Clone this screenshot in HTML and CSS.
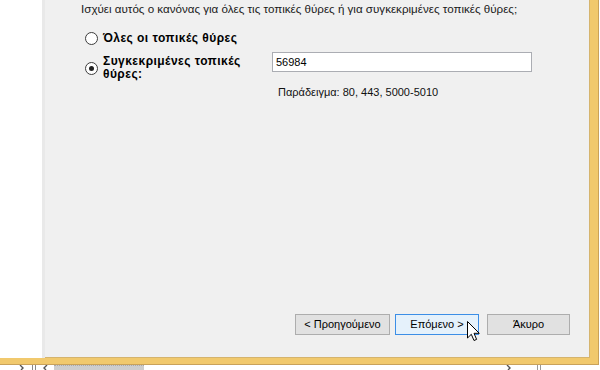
FILE: index.html
```html
<!DOCTYPE html>
<html lang="el">
<head>
<meta charset="utf-8">
<link rel="stylesheet" href="styles.css">
</head>
<body>
<div class="screen">
  <div class="window">
    <div class="side"></div>
    <div class="panel">
      <p class="intro">Ισχύει αυτός ο κανόνας για όλες τις τοπικές θύρες ή για συγκεκριμένες τοπικές θύρες;</p>
      <div class="options">
        <span class="radio"></span>
        <span class="label one">Όλες οι τοπικές θύρες</span>
        <span></span>
        <span class="radio checked"></span>
        <span class="label two">Συγκεκριμένες τοπικές θύρες:</span>
        <span class="input">56984</span>
        <span></span><span></span>
        <span class="example">Παράδειγμα: 80, 443, 5000-5010</span>
      </div>
      <div class="buttons">
        <span class="btn prev">&lt; Προηγούμενο</span>
        <span class="btn next">Επόμενο &gt;</span>
        <span class="btn cancel">Άκυρο</span>
      </div>
      <svg class="cursor" width="14" height="22" viewBox="0 0 14 22">
        <path d="M1.5 1.5 L1.5 18 L5.3 14.3 L8 20.5 L10.6 19.4 L8 13.3 L13.3 13.3 Z" fill="#fff" stroke="#000" stroke-width="1" stroke-linejoin="miter"/>
      </svg>
    </div>
  </div>
  <div class="strip">
    <svg class="chev r" width="6" height="5" viewBox="0 0 6 5"><path d="M1 0 L4 3 L2 5" fill="none" stroke="#555" stroke-width="1.4"/></svg>
    <span class="bars"></span>
    <svg class="chev l" width="6" height="5" viewBox="0 0 6 5"><path d="M5 0 L2 3 L4 5" fill="none" stroke="#555" stroke-width="1.4"/></svg>
    <span class="thumb"></span>
    <span class="spacer"></span>
    <svg class="chev r2" width="6" height="5" viewBox="0 0 6 5"><path d="M1 0 L4 3 L2 5" fill="none" stroke="#555" stroke-width="1.4"/></svg>
    <span class="vline"></span>
  </div>
</div>
</body>
</html>
```
FILE: styles.css
```css
* { box-sizing: border-box; }
html, body { margin: 0; padding: 0; }
body {
  width: 600px; height: 370px; overflow: hidden;
  background: #fff;
  font-family: "Liberation Sans", Arial, sans-serif;
  font-size: 11px;
  color: #000;
}
.screen { display: flex; flex-direction: column; height: 370px; }
.window {
  display: flex;
  width: 599px;
  height: 365px;
  background: #f1c96d;
  border-right: 1px solid #c9a25a;
  border-bottom: 1px solid #c9a25a;
  padding: 0 8px 6px 0;
}
.side {
  width: 45px;
  background: #fff;
  border-right: 3px solid #e9e9e9;
}
.panel {
  position: relative;
  flex: 1;
  display: flex;
  flex-direction: column;
  background: #f0f0f0;
  border-right: 1px solid #d5b46e;
  border-bottom: 1px solid #d5b46e;
  padding: 2px 19px 22px 0;
}
.intro { margin: 0 0 0 36px; font-size: 11.6px; line-height: 13px; color: #1a1a1a; }
.options {
  display: grid;
  grid-template-columns: 13px 174px 260px;
  margin: 7px 0 0 40px;
  align-items: start;
}
.radio {
  width: 13px; height: 13px;
  border-radius: 50%;
  border: 1px solid #3c3c3c;
  background: #fff;
  margin-top: 10px;
  position: relative;
}
.radio.checked { margin-top: 10px; }
.radio.checked::after {
  content: ""; position: absolute; left: 3px; top: 3px;
  width: 5px; height: 5px; border-radius: 50%; background: #222;
}
.label { font-weight: bold; font-size: 12px; letter-spacing: 0.45px; line-height: 13px; padding-left: 5px; }
.label.one { margin-top: 10px; margin-bottom: 7px; }
.label.two { margin-top: 3px; width: 160px; }
.input {
  height: 20px;
  border: 1px solid #abadb3;
  background: #fff;
  padding: 2px 0 0 3px;
  line-height: 15px;
}
.example { margin: 5px 0 0 6px; line-height: 13px; color: #111; }
.buttons {
  margin-top: auto;
  display: flex;
  justify-content: flex-end;
}
.btn {
  height: 21px;
  display: flex; align-items: center; justify-content: center;
  border: 1px solid #adadad;
  background: #e1e1e1;
  line-height: 13px;
}
.prev { width: 95px; margin-right: 5px; }
.next { width: 84px; margin-right: 8px; border-color: #3c8ee6; background: #e5f1fb; }
.cancel { width: 83px; }
.cursor { position: absolute; left: 421px; top: 320px; }
.strip { display: flex; align-items: flex-start; height: 5px; overflow: hidden; }
.chev { display: block; }
.chev.r { margin-left: 19px; }
.bars { width: 4px; height: 5px; border-left: 1px solid #888; border-right: 1px solid #888; margin-left: 7px; }
.chev.l { margin-left: 6px; }
.thumb { width: 90px; height: 5px; background: #cdcdcd; margin-left: 6px; border-top: 1px dotted #aaa; }
.spacer { flex: 1; }
.chev.r2 { margin-right: 25px; }
.vline { width: 4px; height: 5px; border-left: 1px solid #999; border-right: 1px solid #999; margin-right: 59px; }
```
